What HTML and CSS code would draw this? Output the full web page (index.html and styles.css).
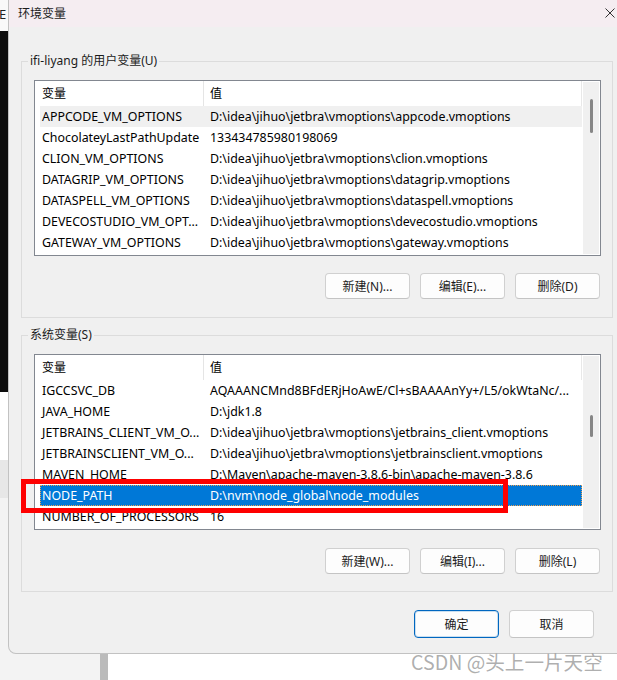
FILE: index.html
```html
<!DOCTYPE html>
<html lang="zh-CN">
<head>
<meta charset="utf-8">
<title>环境变量</title>
<link rel="stylesheet" href="styles.css">
</head>
<body>
<div class="desktop">
  <div class="bgapp">
    <div class="bg-top"><span class="bg-glyph">E</span></div>
    <div class="bg-dark"></div>
    <div class="bg-white"></div>
    <div class="bg-band"></div>
    <div class="bg-rest"></div>
  </div>
  <div class="bg-scroll"></div>
  <div class="bg-page"></div>

  <section class="dialog">
    <header class="titlebar">
      <span class="title">环境变量</span>
      <svg class="close" width="10" height="10" viewBox="0 0 10 10"><path d="M0.5 0.5 L9.5 9.5 M9.5 0.5 L0.5 9.5" stroke="#333" stroke-width="1" fill="none"/></svg>
    </header>
    <div class="dbody">
      <div class="group group-user">
        <div class="legend">ifi-liyang 的用户变量(U)</div>
        <div class="table">
          <div class="list">
            <div class="thead"><div class="h1">变量</div><div class="h2">值</div></div>
            <div class="row hover"><div class="c1">APPCODE_VM_OPTIONS</div><div class="c2">D:\idea\jihuo\jetbra\vmoptions\appcode.vmoptions</div></div>
            <div class="row"><div class="c1">ChocolateyLastPathUpdate</div><div class="c2">133434785980198069</div></div>
            <div class="row"><div class="c1">CLION_VM_OPTIONS</div><div class="c2">D:\idea\jihuo\jetbra\vmoptions\clion.vmoptions</div></div>
            <div class="row"><div class="c1">DATAGRIP_VM_OPTIONS</div><div class="c2">D:\idea\jihuo\jetbra\vmoptions\datagrip.vmoptions</div></div>
            <div class="row"><div class="c1">DATASPELL_VM_OPTIONS</div><div class="c2">D:\idea\jihuo\jetbra\vmoptions\dataspell.vmoptions</div></div>
            <div class="row"><div class="c1">DEVECOSTUDIO_VM_OPT...</div><div class="c2">D:\idea\jihuo\jetbra\vmoptions\devecostudio.vmoptions</div></div>
            <div class="row"><div class="c1">GATEWAY_VM_OPTIONS</div><div class="c2">D:\idea\jihuo\jetbra\vmoptions\gateway.vmoptions</div></div>
          </div>
          <div class="sbar"><div class="thumb thumb-user"></div></div>
        </div>
        <div class="btnrow">
          <button class="btn">新建(N)...</button>
          <button class="btn">编辑(E)...</button>
          <button class="btn">删除(D)</button>
        </div>
      </div>

      <div class="group group-sys">
        <div class="legend">系统变量(S)</div>
        <div class="table">
          <div class="list">
            <div class="thead"><div class="h1">变量</div><div class="h2">值</div></div>
            <div class="row"><div class="c1">IGCCSVC_DB</div><div class="c2">AQAAANCMnd8BFdERjHoAwE/Cl+sBAAAAnYy+/L5/okWtaNc/...</div></div>
            <div class="row"><div class="c1">JAVA_HOME</div><div class="c2">D:\jdk1.8</div></div>
            <div class="row"><div class="c1">JETBRAINS_CLIENT_VM_O...</div><div class="c2">D:\idea\jihuo\jetbra\vmoptions\jetbrains_client.vmoptions</div></div>
            <div class="row"><div class="c1">JETBRAINSCLIENT_VM_O...</div><div class="c2">D:\idea\jihuo\jetbra\vmoptions\jetbrainsclient.vmoptions</div></div>
            <div class="row"><div class="c1">MAVEN_HOME</div><div class="c2">D:\Maven\apache-maven-3.8.6-bin\apache-maven-3.8.6</div></div>
            <div class="row selected"><div class="c1">NODE_PATH</div><div class="c2">D:\nvm\node_global\node_modules</div></div>
            <div class="row"><div class="c1">NUMBER_OF_PROCESSORS</div><div class="c2">16</div></div>
          </div>
          <div class="sbar"><div class="thumb thumb-sys"></div></div>
        </div>
        <div class="btnrow">
          <button class="btn">新建(W)...</button>
          <button class="btn">编辑(I)...</button>
          <button class="btn">删除(L)</button>
        </div>
      </div>

      <div class="footer">
        <button class="btn btn-lg btn-default">确定</button>
        <button class="btn btn-lg">取消</button>
      </div>
    </div>
  </section>

  <div class="redbox"></div>
  <div class="watermark">CSDN @头上一片天空</div>
</div>
</body>
</html>
```

FILE: styles.css
```css
* { box-sizing: border-box; }
html, body { margin: 0; padding: 0; }
body {
  font-family: "Noto Sans", "Noto Sans CJK SC", sans-serif;
  font-size: 12px;
  color: #000;
  background: #fff;
}
.desktop {
  position: relative;
  width: 617px;
  height: 680px;
  overflow: hidden;
  display: flex;
}
.bgapp { width: 100px; display: flex; flex-direction: column; }
.bg-top { height: 31px; background: #f9f9f9; overflow: hidden; }
.bg-glyph { display: block; font-size: 13px; line-height: 16px; margin: 6px 0 0 -1px; color: #222; }
.bg-dark { height: 361px; background: #0d0d0d; }
.bg-white { height: 68px; background: #ffffff; }
.bg-band { height: 38px; background: #e7e7e7; }
.bg-rest { flex: 1; background: #f3f3f3; }
.bg-scroll { width: 8px; background: #bbbbbb; }
.bg-page { flex: 1; background: #ffffff; }

.dialog {
  position: absolute;
  left: 8px;
  top: 0;
  width: 617px;
  height: 654px;
  background: #f0f0f0;
  border: 1px solid #c2c2c2;
  border-top: none;
  border-radius: 0 0 8px 8px;
  display: flex;
  flex-direction: column;
}
.titlebar {
  height: 27px;
  background: #f5edf1;
  display: flex;
  align-items: center;
  justify-content: space-between;
  padding: 0 9px 2px 9px;
}
.title { font-size: 12px; color: #1b1b1b; }
.close { display: block; }

.dbody { padding: 34px 11px 0 12px; display: flex; flex-direction: column; }

.group {
  border: 1px solid #dcdcdc;
  padding: 0 11px 18px 12px;
  display: flex;
  flex-direction: column;
}
.group-sys { margin-top: 17px; padding-bottom: 17px; }
.legend {
  align-self: flex-start;
  margin: -9px 0 0 -6px;
  padding: 0 2px;
  line-height: 16px;
  background: #f0f0f0;
  color: #1b1b1b;
}
.table {
  margin-top: 11px;
  height: 176px;
  border: 1px solid #828790;
  background: #fff;
  display: flex;
}
.list {
  flex: 1;
  padding-left: 5px;
  overflow: hidden;
  display: flex;
  flex-direction: column;
}
.thead { height: 25px; display: flex; flex-shrink: 0; border-right: 1px solid #e8e8e8; }
.h1 { width: 164px; padding-left: 2px; line-height: 25px; border-right: 1px solid #e5e5e5; }
.h2 { padding-left: 6px; line-height: 25px; }
.row { height: 21px; display: flex; flex-shrink: 0; white-space: nowrap; font-size: 12.4px; }
.c1 { width: 164px; flex-shrink: 0; padding-left: 2px; line-height: 21px; overflow: hidden; }
.c2 { flex: 1; padding-left: 6px; line-height: 21px; overflow: hidden; }
.row.hover { background: #f0f0f0; }
.row.selected { background: #0078d7; color: #fff; outline: 1px dotted #f0a050; outline-offset: -1px; }

.sbar { width: 16px; margin: 1px; background: #f0f0f0; flex-shrink: 0; }
.thumb { width: 3px; margin-left: 7px; background: #868686; border-radius: 2px; }
.thumb-user { margin-top: 17px; height: 34px; }
.thumb-sys { margin-top: 59px; height: 22px; }

.btnrow { display: flex; justify-content: flex-end; gap: 10px; margin-top: 17px; padding-right: 1px; }
.group-sys .btnrow { margin-top: 18px; }
.btn {
  width: 85px;
  height: 26px;
  border: 1px solid #d0d0d0;
  border-bottom-color: #c4c4c4;
  border-radius: 4px;
  background: #fdfdfd;
  font-family: "Noto Sans", "Noto Sans CJK SC", sans-serif;
  font-size: 12px;
  color: #1b1b1b;
  padding: 0;
}
.footer { display: flex; justify-content: flex-end; gap: 10px; margin-top: 18px; padding-right: 19px; }
.btn-lg { height: 28px; }
.btn-default { border: 1px solid #0067c0; box-shadow: inset 0 0 0 1px rgba(0, 103, 192, 0.2); background: #fdfdfd; }

.redbox {
  position: absolute;
  left: 21px;
  top: 479px;
  width: 487px;
  height: 34px;
  border: 5px solid #fe0000;
}
.watermark {
  position: absolute;
  left: 411px;
  top: 649px;
  font-family: "Noto Sans CJK SC", sans-serif;
  font-size: 19.6px;
  line-height: 26px;
  color: rgba(140, 140, 140, 0.7);
  white-space: nowrap;
}
```
